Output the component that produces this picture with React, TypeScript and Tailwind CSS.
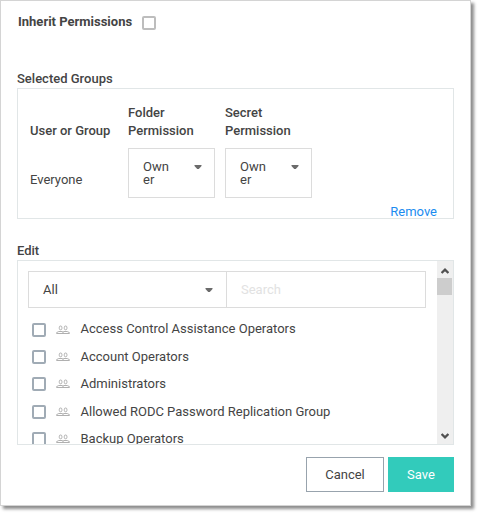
import React from "react";

const groups = [
  "Access Control Assistance Operators",
  "Account Operators",
  "Administrators",
  "Allowed RODC Password Replication Group",
  "Backup Operators",
];

function Caret() {
  return (
    <svg width="8" height="4" viewBox="0 0 8 4" className="block shrink-0" fill="#6b6b6b">
      <path d="M.5 0h7v1L4.8 4H3.2L.5 1z" />
    </svg>
  );
}

function PeopleIcon() {
  return (
    <svg width="14" height="10" viewBox="0 0 14 10" className="ml-[10px] mt-[2px] block shrink-0" fill="none" stroke="#b0b0b0" strokeWidth="1">
      <rect x="3.3" y="1" width="2.6" height="3.8" rx="1.3" />
      <rect x="8.3" y="1" width="2.6" height="3.8" rx="1.3" />
      <path d="M.6 8.5V7.6L2.8 6.5h3.4L7 7l.8-.5h3.4l2.2 1.1v.9zM7 7v1.5" />
    </svg>
  );
}

function PermissionSelect() {
  return (
    <div className="flex h-[50px] w-[87px] items-start border border-[#dcdcdc] pl-[14px] pt-[11px]">
      <span className="w-[51px] leading-[13px]">
        Own
        <br />
        er
      </span>
      <div className="pt-[5px]">
        <Caret />
      </div>
    </div>
  );
}

function Chevron({ down = false }: { down?: boolean }) {
  return (
    <svg width="8" height="6" viewBox="0 0 8 6" className={down ? "mr-px rotate-180" : "mr-px mt-[2px]"} fill="none" stroke="#505050" strokeWidth="2.3">
      <path d="M.6 5L4 1.7 7.4 5" />
    </svg>
  );
}

export default function App() {
  return (
    <div className="h-[514px] w-[479px] overflow-hidden bg-white font-['Roboto',sans-serif] text-[13px] text-[#444444]">
      <div className="h-[506px] w-[471px] border border-[#d4d4d4] bg-white pl-4 shadow-[3px_3px_3px_0_rgba(0,0,0,0.45)]">
        <div className="flex h-[43px] items-center pl-px">
          <span className="-mt-[2px] w-[124px] font-bold leading-4">Inherit Permissions</span>
          <span className="mt-px h-[14px] w-[14px] rounded-[2px] border-2 border-[#bdbdbd]" />
        </div>
        <h2 className="mt-[26px] h-[18px] font-medium leading-[18px]">Selected Groups</h2>
        <section className="flex h-[131px] w-[437px] flex-col border border-[#e1e6e7] pl-3 pt-[15px]">
          <div className="grid grid-cols-[98px_97px_97px] items-end font-medium leading-[18px]">
            <span>User or Group</span>
            <span>Folder<br />Permission</span>
            <span>Secret<br />Permission</span>
          </div>
          <div className="mt-2 grid grid-cols-[98px_97px_97px]">
            <span className="pt-[23px] leading-[18px]">Everyone</span>
            <PermissionSelect />
            <PermissionSelect />
          </div>
          <a className="mr-4 mt-[5px] self-end leading-[18px] text-[#1b8cf0]">Remove</a>
        </section>
        <h2 className="mt-[23px] h-[18px] font-medium leading-[18px]">Edit</h2>
        <section className="flex h-[185px] w-[437px] overflow-hidden border border-[#e1e6e7]">
          <div className="w-[419px] pl-[10px] pt-[10px]">
            <div className="flex h-[37px] w-[398px] border border-[#dcdcdc]">
              <div className="flex w-[198px] items-center justify-between border-r border-[#dcdcdc] pl-[14px] pr-[13px]">
                <span>All</span>
                <Caret />
              </div>
              <div className="flex items-center pl-[14px] text-[#e2e2e2]">Search</div>
            </div>
            <div className="pt-[7px]">
              {groups.map((name) => (
                <div key={name} className="flex h-[27.4px] items-center pl-1">
                  <span className="mt-[2px] h-[14px] w-[14px] shrink-0 rounded-[2px] border-2 border-[#a0abb5]" />
                  <PeopleIcon />
                  <span className="ml-[10.5px] mt-[1.4px] whitespace-nowrap leading-4">{name}</span>
                </div>
              ))}
            </div>
          </div>
          <div className="flex w-4 flex-col items-center bg-[#efefef]">
            <div className="flex h-[17px] items-center"><Chevron /></div>
            <div className="mr-px h-[17px] w-[15px] bg-[#cdcdcd]" />
            <div className="mt-auto flex h-[17px] items-center"><Chevron down /></div>
          </div>
        </section>
        <div className="mt-3 flex w-[437px] justify-end gap-1">
          <button className="h-[35px] w-[78px] border border-[#98a3ad] bg-white">Cancel</button>
          <button className="h-[35px] w-[66px] bg-[#32cbbb] text-white">Save</button>
        </div>
      </div>
    </div>
  );
}
